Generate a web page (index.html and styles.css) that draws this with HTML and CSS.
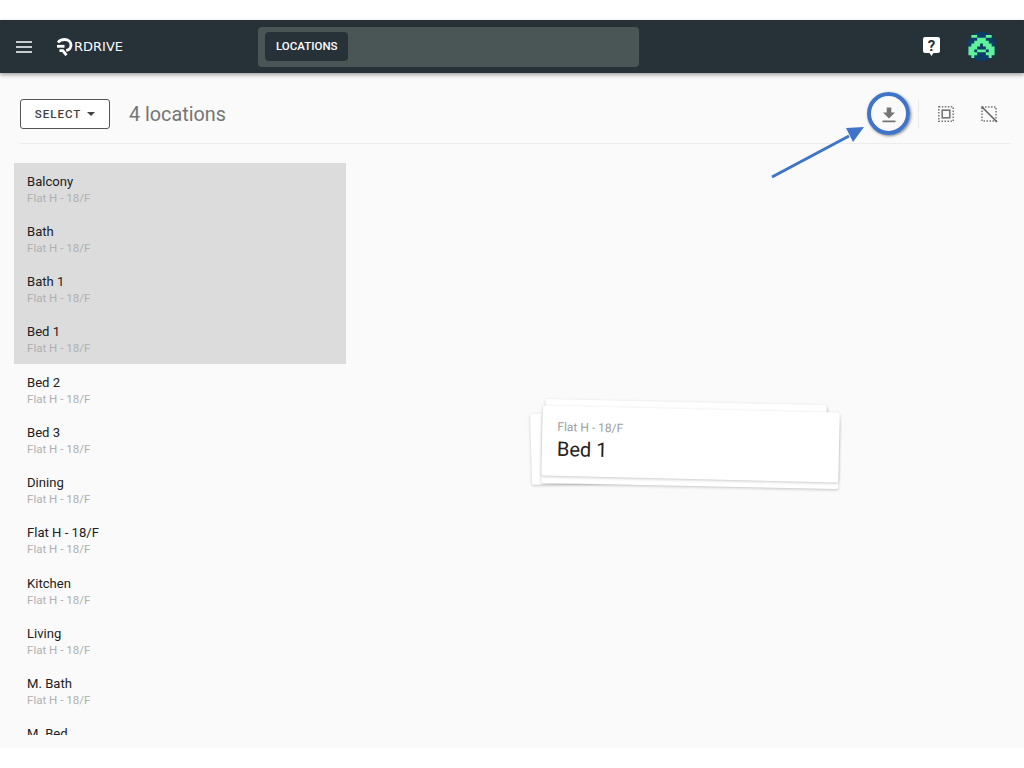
FILE: index.html
```html
<!DOCTYPE html>
<html>
<head>
    <title>Locations</title>
    <link rel="stylesheet" href="styles.css">
</head>
<body>
    <div class="app">
        <header class="topbar">
            <svg class="menu-icon" width="16" height="12" viewBox="0 0 16 12"><path d="M0 1h16M0 6h16M0 11h16" stroke="#fff" stroke-width="1.6"/></svg>
            <div class="logo">
                <svg width="17" height="18" viewBox="0 0 17 18" fill="none" stroke="#fff" stroke-width="2.800"><path d="M2 4.500C3.500 2.500 6 1.500 8.500 1.500c3.800 0 6.500 2.400 6.500 5.500 0 2.800-2 4.800-4.800 5.500"/><path d="M1 8.300h7.500"/><path d="M3.500 12.600h3.300l3.700 4.600"/></svg>
                <span class="logo-text">RDRIVE</span>
            </div>
            <div class="search">
                <span class="chip">LOCATIONS</span>
            </div>
            <div class="topbar-right">
                <svg width="17" height="19" viewBox="0 0 17 19"><path d="M2 0h13a2 2 0 0 1 2 2v12a2 2 0 0 1-2 2h-4.500L8.500 19l-2-3H2a2 2 0 0 1-2-2V2a2 2 0 0 1 2-2z" fill="#fff"/><text x="8.500" y="13.500" class="help-mark">?</text></svg>
                <svg width="29" height="29" viewBox="0 0 30 30">
                    <circle cx="15" cy="15" r="15" fill="#0d3c66"/>
                    <path d="M4.500 3h6v3h-6zM19.500 3h6v3h-6zM10.500 6h9v3h-9zM7.500 9h15v3h-15zM4.500 12h9v3h-9zM16.500 12h9v3h-9zM1.500 15h9v3h-9zM19.500 15h9v3h-9zM1.500 18h6v3h-6zM10.500 18h9v3h-9zM22.500 18h6v3h-6zM1.500 21h9v3h-9zM19.500 21h9v3h-9zM4.500 24h3v3h-3zM22.500 24h3v3h-3z" fill="#5ff29a"/>
                </svg>
            </div>
        </header>

        <main class="content">
            <div class="toolbar">
                <button class="select-btn">SELECT <span class="caret"></span></button>
                <span class="count">4 locations</span>
                <div class="tools">
                    <svg class="tool" width="24" height="24" viewBox="0 0 24 24"><path d="M18 10.500h-3.700V5.500H9.700v5H6l6 6z M5.500 18.500h13v1.700h-13z" fill="#757575"/></svg>
                    <span class="divider"></span>
                    <svg class="tool" width="24" height="24" viewBox="0 0 24 24"><rect x="8.200" y="8.200" width="7.600" height="7.600" fill="none" stroke="#757575" stroke-width="1.600"/><rect x="4.800" y="4.800" width="14.400" height="14.400" fill="none" stroke="#757575" stroke-width="1.500" stroke-dasharray="1.500 1.500"/></svg>
                    <svg class="tool" width="24" height="24" viewBox="0 0 24 24"><rect x="5" y="5" width="14" height="14" fill="none" stroke="#757575" stroke-width="1.500" stroke-dasharray="1.500 1.500"/><path d="M4.500 4.500l15.500 15.500" stroke="#616161" stroke-width="1.600"/></svg>
                </div>
            </div>

            <div class="list">
                <div class="row selected"><div class="name">Balcony</div><div class="sub">Flat H - 18/F</div></div>
                <div class="row selected"><div class="name">Bath</div><div class="sub">Flat H - 18/F</div></div>
                <div class="row selected"><div class="name">Bath 1</div><div class="sub">Flat H - 18/F</div></div>
                <div class="row selected"><div class="name">Bed 1</div><div class="sub">Flat H - 18/F</div></div>
                <div class="row"><div class="name">Bed 2</div><div class="sub">Flat H - 18/F</div></div>
                <div class="row"><div class="name">Bed 3</div><div class="sub">Flat H - 18/F</div></div>
                <div class="row"><div class="name">Dining</div><div class="sub">Flat H - 18/F</div></div>
                <div class="row"><div class="name">Flat H - 18/F</div><div class="sub">Flat H - 18/F</div></div>
                <div class="row"><div class="name">Kitchen</div><div class="sub">Flat H - 18/F</div></div>
                <div class="row"><div class="name">Living</div><div class="sub">Flat H - 18/F</div></div>
                <div class="row"><div class="name">M. Bath</div><div class="sub">Flat H - 18/F</div></div>
                <div class="row"><div class="name">M. Bed</div></div>
            </div>

            <div class="drag-stack">
                <div class="card card-back1"></div>
                <div class="card card-back2"></div>
                <div class="card card-back3"></div>
                <div class="card card-front">
                    <div class="card-sub">Flat H - 18/F</div>
                    <div class="card-name">Bed 1</div>
                </div>
            </div>

            <div class="callout-ring"></div>
            <svg class="callout-arrow" width="100" height="60" viewBox="0 0 100 60"><path d="M2 52L79 11" stroke="#3f74c9" stroke-width="3"/><path d="M94 2L76 3l7 14z" fill="#3f74c9"/></svg>
        </main>
    </div>
</body>
</html>
```

FILE: styles.css
```css
body {
    margin: 0;
    background-color: #fff;
    font-family: Roboto, "Liberation Sans", sans-serif;
}
.app {
    margin: 20px 0;
    height: 728px;
    display: flex;
    flex-direction: column;
}
.topbar {
    height: 53px;
    flex: none;
    background-color: #263238;
    box-shadow: 0 2px 4px rgba(0, 0, 0, 0.35);
    display: flex;
    align-items: center;
    padding: 0 28px 0 16px;
    position: relative;
    z-index: 2;
}
.menu-icon {
    flex: none;
}
.logo {
    display: flex;
    align-items: center;
    margin-left: 24px;
    width: 202px;
}
.logo-text {
    color: #fff;
    font-family: "DejaVu Sans", sans-serif;
    font-size: 13px;
    margin-left: 1px;
}
.search {
    width: 381px;
    height: 40px;
    box-sizing: border-box;
    padding: 5px 7px;
    background-color: #4a5655;
    border-radius: 4px;
}
.chip {
    display: inline-block;
    height: 29px;
    line-height: 29px;
    padding: 0 10px 0 11px;
    background-color: #263238;
    border-radius: 4px;
    color: #fff;
    font-size: 11.500px;
    font-weight: 500;
}
.topbar-right {
    margin-left: auto;
    display: flex;
    align-items: center;
    gap: 27px;
}
.help-mark {
    font-family: Roboto, sans-serif;
    font-size: 15px;
    font-weight: 700;
    fill: #263238;
    text-anchor: middle;
}
.content {
    flex: 1;
    background-color: #fafafa;
    position: relative;
    overflow: hidden;
    min-height: 0;
}
.toolbar {
    height: 71px;
    box-sizing: border-box;
    padding-top: 12px;
    margin: 0 13px 0 20px;
    border-bottom: 1px solid #ececec;
    display: flex;
    align-items: center;
}
.select-btn {
    width: 90px;
    height: 30px;
    background-color: #fff;
    border: 1px solid #555;
    border-radius: 3px;
    color: #424242;
    font-family: Roboto, sans-serif;
    font-size: 11.500px;
    font-weight: 500;
    letter-spacing: 1px;
    padding: 0;
    display: flex;
    align-items: center;
    justify-content: center;
    gap: 6px;
}
.caret {
    width: 0;
    height: 0;
    border-left: 4px solid transparent;
    border-right: 4px solid transparent;
    border-top: 4px solid #424242;
}
.count {
    margin-left: 19px;
    font-size: 19.800px;
    color: #757575;
}
.tools {
    margin-left: auto;
    display: flex;
    align-items: center;
    margin-right: 10px;
}
.tool {
    flex: none;
}
.divider {
    width: 1px;
    height: 28px;
    background-color: #ececec;
    margin: 0 15px 0 17px;
}
.divider + .tool + .tool {
    margin-left: 19px;
}
.list {
    position: absolute;
    left: 14px;
    top: 90px;
    width: 332px;
    height: 572px;
    overflow: hidden;
}
.row {
    height: 50.250px;
    box-sizing: border-box;
    padding: 10.500px 13px 0;
}
.row.selected {
    background-color: #dcdcdc;
}
.name {
    font-size: 13.100px;
    line-height: 16px;
    color: #212121;
}
.sub {
    font-size: 11.550px;
    line-height: 16px;
    color: #b0b0b0;
}
.drag-stack {
    position: absolute;
    left: 530px;
    top: 326px;
    width: 312px;
    height: 90px;
}
.card {
    position: absolute;
    background-color: #fff;
    border-radius: 2px;
    box-shadow: 0 1px 3px rgba(0, 0, 0, 0.22);
}
.card-back1 {
    left: 1px;
    top: 11px;
    width: 297px;
    height: 71px;
    transform: rotate(-1.500deg);
}
.card-back2 {
    left: 15px;
    top: 3px;
    width: 281px;
    height: 60px;
    transform: rotate(1.200deg);
}
.card-back3 {
    left: 12px;
    top: 17px;
    width: 297px;
    height: 70px;
    transform: rotate(1.200deg);
}
.card-front {
    left: 12px;
    top: 10px;
    width: 297px;
    height: 70px;
    box-sizing: border-box;
    padding: 14px 15px;
    transform: rotate(1.350deg);
}
.card-sub {
    font-size: 12px;
    line-height: 15px;
    color: #9e9e9e;
}
.card-name {
    font-size: 20px;
    line-height: 29px;
    color: #212121;
}
.callout-ring {
    position: absolute;
    left: 867px;
    top: 19px;
    width: 35px;
    height: 35px;
    border: 4px solid #3f74c9;
    border-radius: 50%;
    box-shadow: 1px 1px 3px rgba(0, 0, 0, 0.5);
}
.callout-arrow {
    position: absolute;
    left: 770px;
    top: 52px;
}
```
